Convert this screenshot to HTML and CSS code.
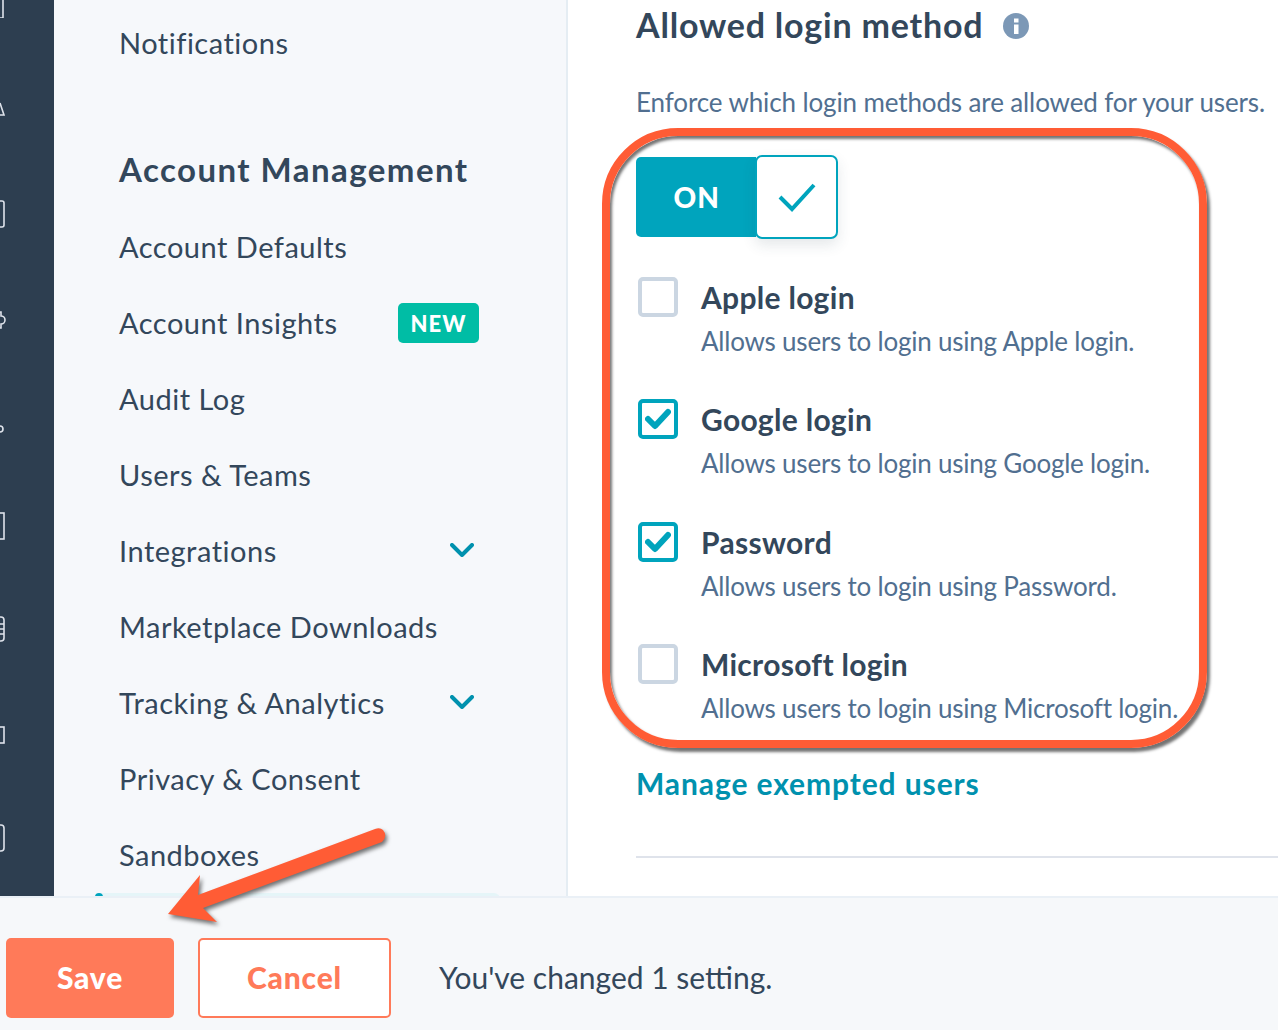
FILE: index.html
```html
<!DOCTYPE html>
<html lang="en">
<head>
<meta charset="utf-8">
<title>Allowed login method</title>
<link rel="stylesheet" href="styles.css">
</head>
<body>
<div class="app">
  <div class="top">
    <nav class="rail">
      <svg class="rail-icon h18" viewBox="0 0 6 18"><path d="M-4 18H3V0"/></svg>
      <svg class="rail-icon h16" viewBox="0 0 6 16"><path d="M-2 15H4L0 3"/></svg>
      <svg class="rail-icon h28" viewBox="0 0 6 28"><rect x="-8" y="1" width="12" height="26" rx="2"/></svg>
      <svg class="rail-icon h20" viewBox="0 0 6 20"><path d="M-2 2H1V6A4 4 0 1 1 1 14V18H-2"/></svg>
      <svg class="rail-icon h10" viewBox="0 0 6 10"><circle cx="0" cy="5" r="3"/></svg>
      <svg class="rail-icon h28" viewBox="0 0 6 28"><rect x="-8" y="1" width="12" height="26"/></svg>
      <svg class="rail-icon h26" viewBox="0 0 6 26"><rect x="-8" y="1" width="12" height="24" rx="3"/><path d="M-2 8H4M-2 13H4M-2 18H4"/></svg>
      <svg class="rail-icon h18" viewBox="0 0 6 18"><rect x="-8" y="1" width="12" height="16"/></svg>
      <svg class="rail-icon h28" viewBox="0 0 6 28"><rect x="-8" y="1" width="12" height="26" rx="3"/></svg>
    </nav>

    <aside class="sidebar">
      <ul class="nav">
        <li class="nav-item">Notifications</li>
      </ul>
      <h2 class="nav-title">Account Management</h2>
      <ul class="nav">
        <li class="nav-item">Account Defaults</li>
        <li class="nav-item">Account Insights <span class="badge">NEW</span></li>
        <li class="nav-item">Audit Log</li>
        <li class="nav-item">Users &amp; Teams</li>
        <li class="nav-item">Integrations
          <svg class="chevron" viewBox="0 0 24 14"><path d="M2 2L12 12L22 2"/></svg>
        </li>
        <li class="nav-item">Marketplace Downloads</li>
        <li class="nav-item">Tracking &amp; Analytics
          <svg class="chevron" viewBox="0 0 24 14"><path d="M2 2L12 12L22 2"/></svg>
        </li>
        <li class="nav-item">Privacy &amp; Consent</li>
        <li class="nav-item">Sandboxes</li>
        <li class="nav-item active"></li>
      </ul>
    </aside>

    <main class="main">
      <div class="heading">
        <h1 class="title">Allowed login method</h1>
        <svg class="info" viewBox="0 0 26 26"><circle cx="13" cy="13" r="13"/><rect x="11" y="5.5" width="4.5" height="4" fill="#fff"/><rect x="11" y="11.5" width="4.5" height="9.5" fill="#fff"/></svg>
      </div>
      <p class="lead">Enforce which login methods are allowed for your users.</p>

      <div class="toggle">
        <span class="toggle-on">ON</span>
        <span class="toggle-thumb">
          <svg viewBox="0 0 38 30"><path d="M2 15L14 27L36 3"/></svg>
        </span>
      </div>

      <div class="options">
        <div class="option">
          <span class="box"></span>
          <div>
            <div class="option-name">Apple login</div>
            <div class="option-desc">Allows users to login using Apple login.</div>
          </div>
        </div>
        <div class="option">
          <span class="box checked"><svg viewBox="0 0 26 22"><path d="M3 11L10 18L23 4"/></svg></span>
          <div>
            <div class="option-name">Google login</div>
            <div class="option-desc">Allows users to login using Google login.</div>
          </div>
        </div>
        <div class="option">
          <span class="box checked"><svg viewBox="0 0 26 22"><path d="M3 11L10 18L23 4"/></svg></span>
          <div>
            <div class="option-name">Password</div>
            <div class="option-desc">Allows users to login using Password.</div>
          </div>
        </div>
        <div class="option">
          <span class="box"></span>
          <div>
            <div class="option-name">Microsoft login</div>
            <div class="option-desc">Allows users to login using Microsoft login.</div>
          </div>
        </div>
      </div>

      <a class="manage" href="#">Manage exempted users</a>
      <hr class="rule">
    </main>
  </div>

  <footer class="footer">
    <button class="btn btn-save">Save</button>
    <button class="btn btn-cancel">Cancel</button>
    <span class="status">You've changed 1 setting.</span>
  </footer>

  <div class="callout"></div>
  <svg class="arrow" viewBox="0 0 1278 1030">
    <path d="M375 829 198 895 200 875 168 914 217 922 203 908 382 842Q388 836 383 830 380 827 375 829Z"/>
  </svg>
</div>
</body>
</html>
```

FILE: styles.css
```css
* { box-sizing: border-box; }

html, body {
  margin: 0;
  height: 100%;
  overflow: hidden;
  background: #fff;
}

body {
  font-family: Lato, "Noto Sans", sans-serif;
  color: #33475b;
}

.app {
  position: relative;
  width: 1278px;
  height: 1030px;
  display: grid;
  grid-template-rows: 896px 134px;
  overflow: hidden;
}

.top {
  display: grid;
  grid-template-columns: 54px 514px 1fr;
  min-height: 0;
  overflow: hidden;
}

/* Dark rail with icons clipped at the left edge */
.rail {
  background: #2d3e50;
  display: flex;
  flex-direction: column;
  align-items: flex-start;
  overflow: hidden;
}

.rail-icon {
  width: 6px;
  flex: none;
  fill: none;
  stroke: #dfe3eb;
  stroke-width: 1.6;
  margin-bottom: 80px;
}

.rail-icon:nth-child(1) { margin-bottom: 82px; }
.rail-icon:nth-child(2) { margin-bottom: 84px; }
.rail-icon:nth-child(3) { margin-bottom: 82px; }
.rail-icon:nth-child(4) { margin-bottom: 94px; }
.rail-icon:nth-child(5) { margin-bottom: 78px; }
.rail-icon:nth-child(6) { margin-bottom: 76px; }
.rail-icon:nth-child(7) { margin-bottom: 84px; }
.rail-icon:nth-child(8) { margin-bottom: 80px; }
.h10 { height: 10px; }
.h16 { height: 16px; }
.h18 { height: 18px; }
.h20 { height: 20px; }
.h26 { height: 26px; }
.h28 { height: 28px; }

/* Settings sidebar */
.sidebar {
  background: #f6f8fb;
  border-right: 2px solid #e5edf3;
  padding: 5px 0 0 65px;
  overflow: hidden;
}

.nav {
  list-style: none;
  margin: 0;
  padding: 0;
}

.nav-item {
  height: 76px;
  width: 359px;
  padding: 0 4px 2px 0;
  display: flex;
  align-items: center;
  justify-content: space-between;
  font-size: 29px;
  letter-spacing: 0.5px;
  white-space: nowrap;
}

.nav-title {
  margin: 50px 0 0;
  height: 78px;
  padding-bottom: 2px;
  display: flex;
  align-items: center;
  font-size: 33px;
  font-weight: 700;
  letter-spacing: 1.45px;
  white-space: nowrap;
}

.badge {
  width: 81px;
  height: 40px;
  margin: 2px -5px 0 0;
  border-radius: 5px;
  background: #00bda5;
  color: #fff;
  font-size: 22px;
  font-weight: 900;
  letter-spacing: 1px;
  display: flex;
  align-items: center;
  justify-content: center;
}

.chevron {
  width: 24px;
  height: 14px;
  fill: none;
  stroke: #0091ae;
  stroke-width: 4;
  stroke-linecap: round;
  stroke-linejoin: round;
}

.nav-item.active {
  width: 405px;
  margin-left: -24px;
  background: #e5f5f8;
  border-radius: 6px 6px 0 0;
  position: relative;
}

.nav-item.active::before {
  content: "";
  position: absolute;
  left: 0;
  top: 0;
  width: 8px;
  height: 8px;
  border-radius: 50%;
  background: #00a4bd;
}

/* Main settings column */
.main {
  padding-left: 68px;
  overflow: hidden;
  white-space: nowrap;
}

.heading {
  height: 52px;
  display: flex;
  align-items: center;
  gap: 20px;
}

.title {
  margin: -4px 0 0;
  font-size: 34px;
  font-weight: 700;
  letter-spacing: 0.8px;
}

.info {
  width: 26px;
  height: 26px;
  fill: #7c98b6;
}

.lead {
  margin: 33px 0 0;
  height: 36px;
  line-height: 34px;
  font-size: 26px;
  letter-spacing: -0.12px;
  color: #516f90;
}

.toggle {
  margin-top: 36px;
  width: 202px;
  height: 80px;
  display: flex;
  align-items: center;
  background: linear-gradient(90deg, #00a4bd 0, #00a4bd 120px, transparent 120px);
  border-radius: 5px 0 0 5px;
}

.toggle-on {
  width: 120px;
  padding-left: 2px;
  text-align: center;
  color: #fff;
  font-size: 28px;
  font-weight: 900;
  letter-spacing: 1px;
}

.toggle-thumb {
  width: 83px;
  height: 84px;
  background: #fff;
  border: 2px solid #00a4bd;
  border-radius: 7px;
  box-shadow: 0 6px 14px rgba(45, 62, 80, 0.12);
  display: flex;
  align-items: center;
  justify-content: center;
}

.toggle-thumb svg {
  width: 38px;
  height: 30px;
  fill: none;
  stroke: #00a4bd;
  stroke-width: 4;
}

.options {
  margin-top: 40px;
}

.option {
  height: 122.3px;
  display: flex;
  gap: 23px;
  padding-left: 2px;
}

.box {
  flex: none;
  width: 40px;
  height: 40px;
  border: 4px solid #cbd6e2;
  border-radius: 5px;
  background: #fff;
  display: flex;
  align-items: center;
  justify-content: center;
}

.box.checked {
  border-color: #00a4bd;
}

.box svg {
  width: 26px;
  height: 22px;
  fill: none;
  stroke: #00a4bd;
  stroke-width: 6;
  stroke-linecap: round;
  stroke-linejoin: round;
}

.option-name {
  height: 42px;
  line-height: 40px;
  font-size: 30px;
  font-weight: 700;
  letter-spacing: 0.3px;
}

.option-desc {
  height: 44px;
  line-height: 44px;
  font-size: 26px;
  letter-spacing: -0.22px;
  color: #516f90;
}

.manage {
  display: block;
  margin-top: -3px;
  height: 40px;
  line-height: 40px;
  font-size: 30px;
  font-weight: 700;
  letter-spacing: 0.9px;
  color: #0091ae;
  text-decoration: none;
}

.rule {
  margin: 53px 0 0;
  height: 2px;
  border: 0;
  background: #dfe3eb;
}

/* Save bar */
.footer {
  background: #f6f8fa;
  border-top: 2px solid #eaf0f6;
  padding: 40px 0 0 6px;
  display: flex;
  align-items: flex-start;
}

.btn {
  height: 80px;
  border-radius: 5px;
  font-family: inherit;
  font-size: 30px;
  font-weight: 900;
  letter-spacing: 0.8px;
  padding: 0 0 2px;
}

.btn-save {
  width: 168px;
  background: #ff7a59;
  border: 0;
  color: #fff;
}

.btn-cancel {
  width: 193px;
  margin-left: 24px;
  background: #fff;
  border: 2px solid #ff7a59;
  color: #ff7a59;
}

.status {
  margin-left: 48px;
  height: 80px;
  line-height: 78px;
  font-size: 30px;
}

/* Annotations laid over the screenshot */
.callout {
  position: absolute;
  left: 602px;
  top: 128px;
  width: 605px;
  height: 620px;
  border: 8px solid #ff5c35;
  border-radius: 76px;
  box-shadow: 3px 4px 3px rgba(0, 0, 0, 0.55), inset 2px 3px 3px rgba(0, 0, 0, 0.55);
  pointer-events: none;
}

.arrow {
  position: absolute;
  left: 0;
  top: 0;
  width: 1278px;
  height: 1030px;
  fill: #ff5c35;
  filter: drop-shadow(2px 3px 2px rgba(0, 0, 0, 0.55));
  pointer-events: none;
}
```
